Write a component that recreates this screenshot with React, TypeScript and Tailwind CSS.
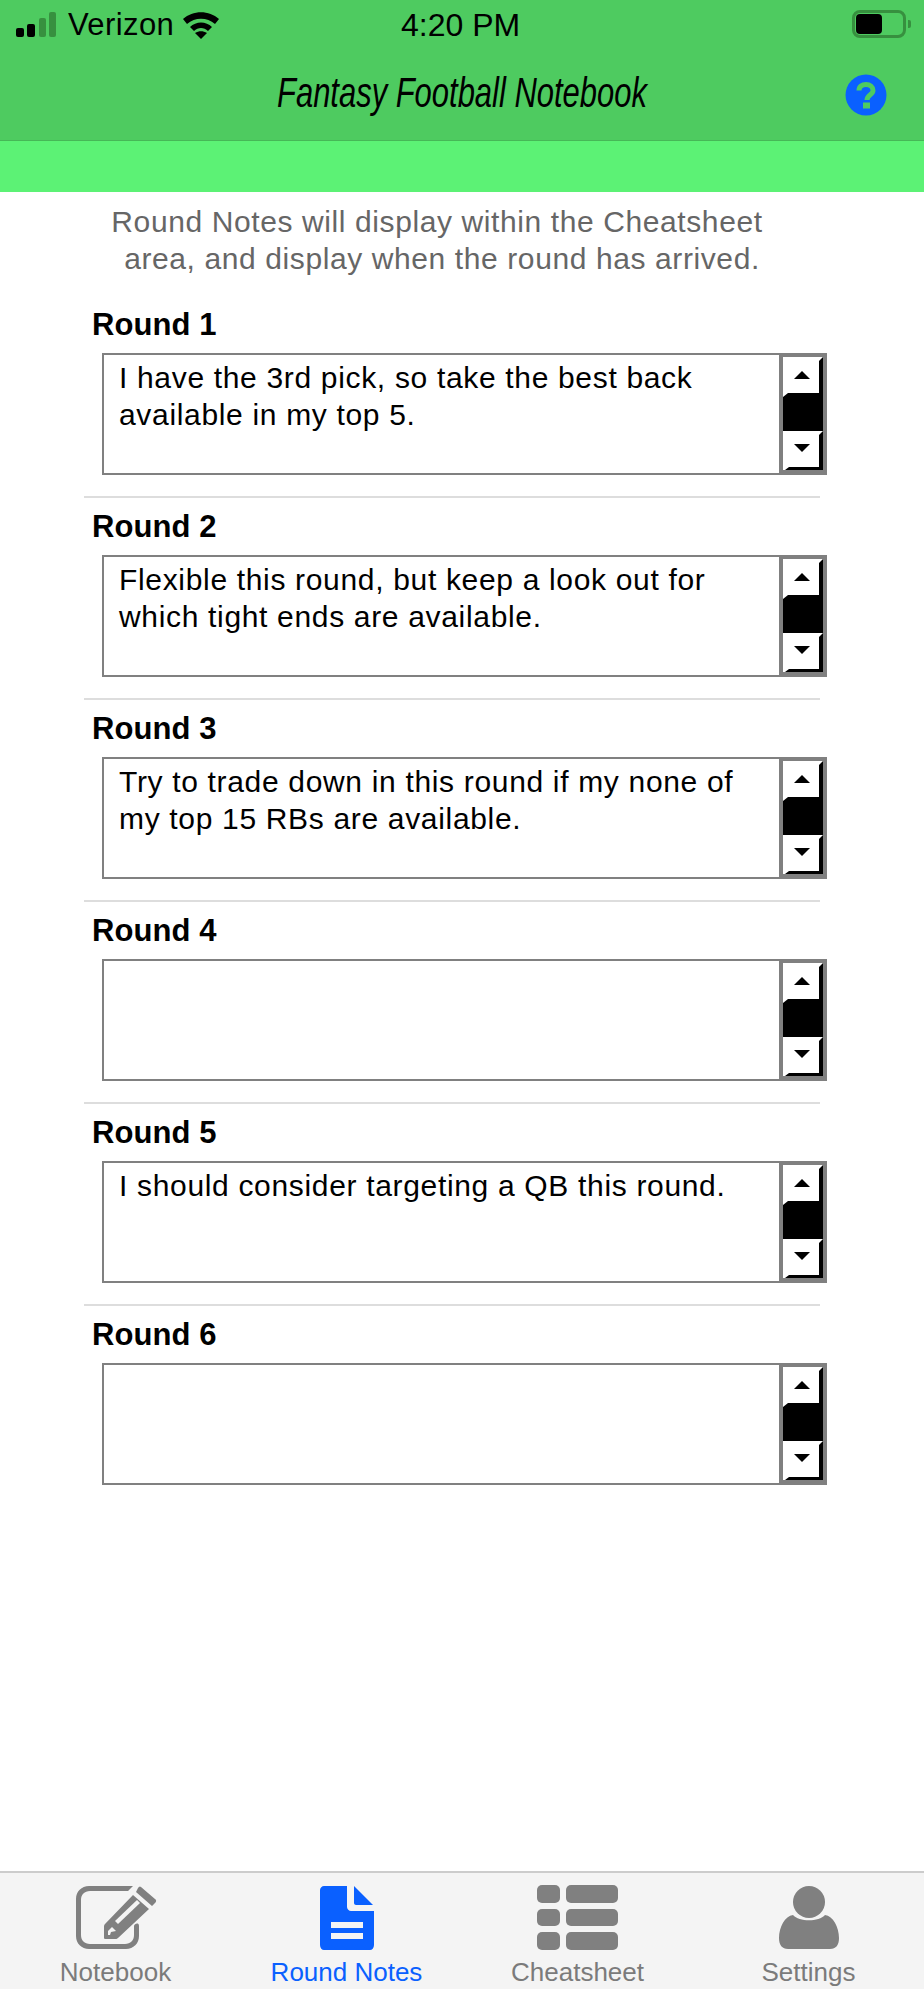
import React from "react";

const rounds = [
  { label: "Round 1", lines: ["I have the 3rd pick, so take the best back", "available in my top 5."] },
  { label: "Round 2", lines: ["Flexible this round, but keep a look out for", "which tight ends are available."] },
  { label: "Round 3", lines: ["Try to trade down in this round if my none of", "my top 15 RBs are available."] },
  { label: "Round 4", lines: [] },
  { label: "Round 5", lines: ["I should consider targeting a QB this round."] },
  { label: "Round 6", lines: [] },
];

function ScrollControls() {
  return (
    <svg width="40" height="113" viewBox="0 0 40 113" className="block">
      <rect width="40" height="113" fill="#fff" />
      <path d="M40 0V36H36V4Z" fill="#000" />
      <path d="M5 36H40V74H0V40Z" fill="#000" />
      <path d="M40 74V113H2L6 110H36V78Z" fill="#000" />
      <path d="M11 22L19 14L27 22Z" fill="#000" />
      <path d="M11 87H27L19 95Z" fill="#000" />
    </svg>
  );
}

function ScrollBar() {
  return (
    <div className="w-[48px] shrink-0 border-x-4 border-t-2 border-b-[3px] border-[#808080]">
      <ScrollControls />
    </div>
  );
}

function Round({ label, lines, last }: { label: string; lines: string[]; last: boolean }) {
  return (
    <div className={`h-[202px] ${last ? "" : "border-b-2 border-[#dddddd]"} ml-[84px] w-[736px] flex flex-col`}>
      <div className="h-[57px] pl-[8px] pt-[9px] text-[31px] leading-[40px] font-bold text-black tracking-[0.1px]">{label}</div>
      <div className="ml-[18px] w-[725px] h-[122px] flex border-2 border-[#808080] border-r-0 bg-white">
        <div className="flex-1 pl-[15px] pt-[4px] text-[30px] leading-[37px] text-black tracking-[0.67px]">
          {lines.map((l) => (
            <div key={l} className="whitespace-nowrap">{l}</div>
          ))}
        </div>
        <ScrollBar />
      </div>
    </div>
  );
}

function NotebookIcon() {
  return (
    <svg width="82" height="65" viewBox="0 0 82 65" fill="#808080">
      <path d="M58 1H14C6.500 1 1 6.500 1 14V51C1 58.500 6.500 64 14 64H51C58.500 64 64 58.500 64 51V41C64 39 63 38.500 62 38.500C61 38.500 59 39.500 59 41V50C59 55.500 55.500 59 50 59H15C9.500 59 6 55.500 6 50V15C6 9.500 9.500 6 15 6H53Z" />
      <path d="M66 2L80 14C81.500 15 81.500 16.500 80 18L77 21L61 7L63 3C64 1.500 65 1 66 2Z" />
      <path d="M58 10L74 24L43 53C42 54 41 54 40 54H30C29 54 29 53 29 52V42C29 41 29 40 30 39Z" />
      <path d="M62 15L65 18L43 39L40 36Z" fill="#f4f4f4" />
      <path d="M33 46L37 42L41 46L36 47L35 50L33 50Z" fill="#f4f4f4" />
    </svg>
  );
}

function NotesIcon() {
  return (
    <svg width="54" height="65" viewBox="0 0 54 65" fill="#0a60ff">
      <path d="M4 1H27V22C27 24 29 26 31 26H54V60C54 63 52 65 50 65H4C2 65 0 63 0 60V5C0 3 2 1 4 1Z" />
      <path d="M34 1L53 20H36C35 20 34 19 34 18Z" />
      <rect x="11" y="37" width="32" height="6" fill="#f4f4f4" />
      <rect x="11" y="48" width="32" height="6" fill="#f4f4f4" />
    </svg>
  );
}

function GridIcon() {
  return (
    <div className="w-[82px] h-[65px] grid grid-cols-[23px_52px] grid-rows-3 gap-x-[6px] gap-y-[6px]">
      {[0, 1, 2, 3, 4, 5].map((i) => (
        <div key={i} className="bg-[#808080] rounded-[5px]" />
      ))}
    </div>
  );
}

function PersonIcon() {
  return (
    <svg width="60" height="65" viewBox="0 0 60 65" fill="#808080">
      <circle cx="30" cy="17" r="16" />
      <path d="M14 30C20 37 40 37 46 30C54 31 60 42 60 53C60 60 57 64 51 64H9C3 64 0 60 0 53C0 42 6 31 14 30Z" />
    </svg>
  );
}

function HelpIcon() {
  return (
    <svg width="42" height="42" viewBox="0 0 42 42" className="absolute left-[845px] top-[24px]">
      <circle cx="21" cy="21" r="20.500" fill="#0a60ff" />
      <path d="M14 16.500C14 12.500 17 10.500 21 10.500C25 10.500 28 13 28 16.500C28 21 22 20.500 22 26" fill="none" stroke="#4ecb60" strokeWidth="5" />
      <rect x="18" y="28.500" width="7" height="6" fill="#4ecb60" />
    </svg>
  );
}

function Tab({ label, active, children }: { label: string; active?: boolean; children: React.ReactNode }) {
  return (
    <div className="flex flex-col items-center">
      <div className="h-[65px] flex items-center justify-center">{children}</div>
      <div className={`mt-[7px] text-[26px] leading-[30px] whitespace-nowrap ${active ? "text-[#0a60ff]" : "text-[#7b7b7b]"}`}>{label}</div>
    </div>
  );
}

export default function App() {
  return (
    <div className="w-[924px] h-[2000px] bg-white flex flex-col font-['Liberation_Sans',sans-serif]">
      <header className="h-[141px] bg-[#4ecb60] border-b border-[#46b857] relative shrink-0">
        <div className="h-[50px] flex items-center relative">
          <svg width="42" height="26" viewBox="0 0 42 26" className="ml-[15px]">
            <rect x="1" y="16" width="8" height="9" rx="2" fill="#000" />
            <rect x="12" y="12" width="8" height="13" rx="2" fill="#000" />
            <rect x="24" y="6" width="7" height="19" rx="2" fill="#37903f" />
            <rect x="34" y="0" width="7" height="25" rx="2" fill="#37903f" />
          </svg>
          <span className="ml-[11px] text-[31px] leading-[30px] text-black tracking-[0.4px]">Verizon</span>
          <svg width="38" height="28" viewBox="0 0 38 28" className="ml-[8px]">
            <path d="M1 8C11 -1 27 -1 37 8L33 13C25 6 13 6 5 13Z" fill="#000" />
            <path d="M8 16C14 10 24 10 30 16L26 20C22 16 16 16 12 20Z" fill="#000" />
            <path d="M13 22C17 19.500 21 19.500 25 22L19 28Z" fill="#000" />
          </svg>
          <span className="absolute left-[401px] top-[9px] text-[32px] leading-[32px] text-black whitespace-nowrap">4:20 PM</span>
          <div className="absolute left-[852px] top-[10px] w-[54px] h-[28px] border-[3px] border-[#37903f] rounded-[8px] p-[1px]">
            <div className="w-[26px] h-[20px] bg-black rounded-[4px]" />
          </div>
          <div className="absolute left-[908px] top-[20px] w-[3px] h-[8px] bg-[#37903f] rounded-r-[2px]" />
        </div>
        <div className="h-[90px] flex items-center justify-center relative">
          <span className="text-[42px] leading-[46px] italic text-black whitespace-nowrap scale-x-[0.737] -mt-[5px]">Fantasy Football Notebook</span>
          <HelpIcon />
        </div>
      </header>
      <div className="h-[51px] bg-[#5cf275] shrink-0" />
      <div className="mt-[11px] text-center text-[30px] leading-[37px] text-[#666666] tracking-[0.6px]">
        <div className="pr-[50px]">Round Notes will display within the Cheatsheet</div>
        <div className="pr-[40px]">area, and display when the round has arrived.</div>
      </div>
      <div className="mt-[19px] flex-1 flex flex-col">
        {rounds.map((r, i) => (
          <Round key={r.label} label={r.label} lines={r.lines} last={i === rounds.length - 1} />
        ))}
      </div>
      <nav className="h-[118px] border-t-2 border-[#cccccc] bg-[#f4f4f4] grid grid-cols-4 pt-[12px] shrink-0 mb-[11px]">
        <Tab label="Notebook"><NotebookIcon /></Tab>
        <Tab label="Round Notes" active><NotesIcon /></Tab>
        <Tab label="Cheatsheet"><GridIcon /></Tab>
        <Tab label="Settings"><PersonIcon /></Tab>
      </nav>
    </div>
  );
}
